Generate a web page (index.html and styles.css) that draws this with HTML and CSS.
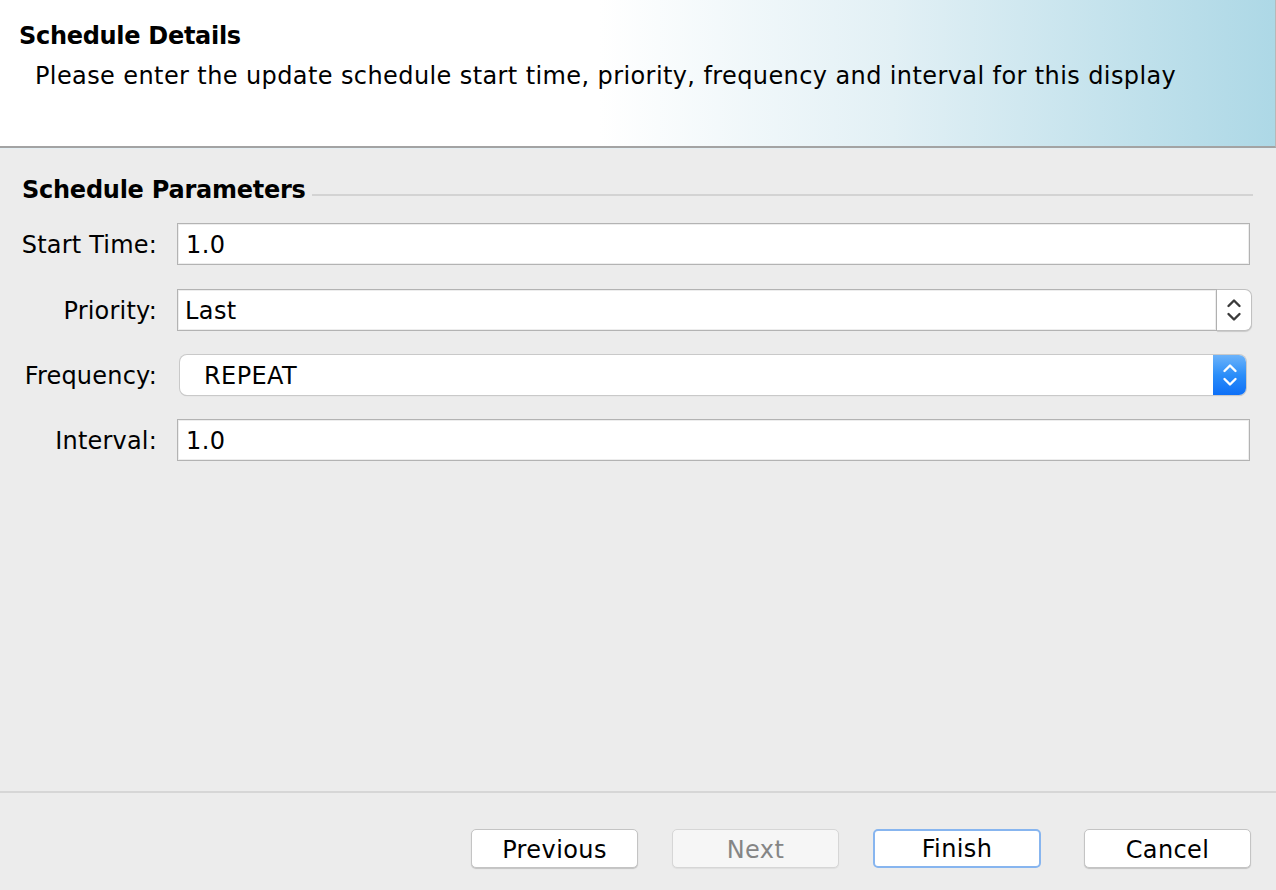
FILE: index.html
```html
<!DOCTYPE html>
<html>
<head>
<meta charset="utf-8">
<link rel="stylesheet" href="styles.css">
</head>
<body>
<div class="dialog">
  <header class="banner">
    <div class="banner-title">Schedule Details</div>
    <div class="banner-desc">Please enter the update schedule start time, priority, frequency and interval for this display</div>
  </header>
  <main class="content">
    <div class="group-title"><span class="group-label">Schedule Parameters</span><span class="group-rule"></span></div>
    <div class="form">
      <label class="lbl">Start Time:</label>
      <div class="field text-field">1.0</div>
      <label class="lbl">Priority:</label>
      <div class="field spinner">
        <div class="spinner-text">Last</div>
        <div class="spinner-btn">
          <svg width="18" height="28" viewBox="0 0 18 28"><path d="M3.5 10 L9 4.5 L14.5 10" fill="none" stroke="#3a3a3a" stroke-width="2.4" stroke-linecap="round" stroke-linejoin="round"/><path d="M3.5 18 L9 23.5 L14.5 18" fill="none" stroke="#3a3a3a" stroke-width="2.4" stroke-linecap="round" stroke-linejoin="round"/></svg>
        </div>
      </div>
      <label class="lbl">Frequency:</label>
      <div class="combo">
        <div class="combo-text">REPEAT</div>
        <div class="combo-btn">
          <svg width="18" height="28" viewBox="0 0 18 28"><path d="M3.5 10 L9 4.5 L14.5 10" fill="none" stroke="#ffffff" stroke-width="2.4" stroke-linecap="round" stroke-linejoin="round"/><path d="M3.5 18 L9 23.5 L14.5 18" fill="none" stroke="#ffffff" stroke-width="2.4" stroke-linecap="round" stroke-linejoin="round"/></svg>
        </div>
      </div>
      <label class="lbl">Interval:</label>
      <div class="field text-field">1.0</div>
    </div>
  </main>
  <footer class="footer">
    <button class="btn">Previous</button>
    <button class="btn disabled">Next</button>
    <button class="btn default">Finish</button>
    <button class="btn">Cancel</button>
  </footer>
</div>
</body>
</html>
```

FILE: styles.css
```css
* { box-sizing: border-box; }
html, body { margin: 0; padding: 0; }
body {
  width: 1276px;
  height: 890px;
  background: #ececec;
  font-family: "DejaVu Sans", "Liberation Sans", sans-serif;
  color: #000;
  overflow: hidden;
  letter-spacing: 0.4px;
}
.dialog {
  display: flex;
  flex-direction: column;
  height: 890px;
}
.banner {
  height: 148px;
  background: linear-gradient(90deg, #ffffff 0%, #ffffff 47%, #e2f0f5 70%, #add8e6 100%);
  border-bottom: 2px solid #a3a3a3;
  border-right: 1px solid #b8b8b8;
  padding: 21px 0 0 19px;
  flex: none;
}
.banner-title {
  font-weight: bold;
  font-size: 24px;
  line-height: 30px;
  letter-spacing: -0.3px;
}
.banner-desc {
  font-size: 24px;
  line-height: 30px;
  margin-top: 10px;
  padding-left: 16px;
}
.content {
  flex: 1;
  padding-top: 24px;
  border-top: 1px solid #e4eef2;
}
.group-title {
  display: flex;
  align-items: center;
  padding-left: 22px;
  padding-right: 23px;
  height: 34px;
}
.group-label {
  font-weight: bold;
  font-size: 24px;
  letter-spacing: -0.25px;
}
.group-rule {
  flex: 1;
  height: 2px;
  background: #d3d3d3;
  margin-left: 6px;
  margin-top: 10px;
}
.form {
  display: grid;
  grid-template-columns: 157px 1fr;
  column-gap: 20px;
  row-gap: 24px;
  padding: 0 26px 0 0;
  margin-top: 16px;
  font-size: 24px;
}
.lbl {
  text-align: right;
  align-self: center;
  padding-top: 2px;
  letter-spacing: 0.2px;
}
.field {
  height: 42px;
  background: #fff;
  border: 1px solid #b3b3b3;
  box-shadow: inset 0 0 0 1px #ededed;
  display: flex;
  align-items: center;
  padding-left: 8px;
  padding-top: 2px;
}
.spinner {
  padding-left: 0;
  padding-top: 0;
  border: none;
  box-shadow: none;
  background: transparent;
  margin-right: -2px;
}
.spinner-text {
  flex: 1;
  height: 42px;
  background: #fff;
  border: 1px solid #b3b3b3;
  display: flex;
  align-items: center;
  padding-left: 7px;
  padding-top: 2px;
  box-shadow: inset 0 0 0 1px #ededed;
}
.spinner-btn {
  width: 35px;
  height: 42px;
  background: #fff;
  border: 1px solid #c0c0c0;
  border-left: none;
  border-radius: 0 7px 7px 0;
  box-shadow: 0 1px 1px rgba(0,0,0,0.15);
  display: flex;
  align-items: center;
  justify-content: center;
}
.combo {
  height: 40px;
  margin: 0 4px 0 3px;
  display: flex;
  border-radius: 7px;
  background: #fff;
  box-shadow: 0 0 0 1px #c9c9c9, 0 1px 1px rgba(0,0,0,0.2);
  overflow: hidden;
}
.combo-text {
  flex: 1;
  display: flex;
  align-items: center;
  padding-left: 24px;
  padding-top: 2px;
}
.combo-btn {
  width: 33px;
  background: linear-gradient(180deg, #6cb3fa 0%, #2b8ef9 50%, #0e70f7 100%);
  display: flex;
  align-items: center;
  justify-content: center;
}
.footer {
  flex: none;
  height: 99px;
  border-top: 2px solid #d6d6d6;
  display: flex;
  align-items: flex-start;
  justify-content: flex-end;
  padding: 36px 25px 0 0;
  gap: 34px;
}
.btn {
  font-family: inherit;
  font-size: 24px;
  letter-spacing: 0.4px;
  width: 167px;
  height: 39px;
  background: #fff;
  border: 1px solid #c4c4c4;
  border-radius: 5px;
  box-shadow: 0 1px 1px rgba(0,0,0,0.18);
  color: #000;
  padding: 3px 0 0 0;
  line-height: 34px;
}
.btn.disabled {
  background: #f6f6f6;
  color: #858585;
  border-color: #d6d6d6;
  box-shadow: 0 1px 1px rgba(0,0,0,0.06);
}
.btn.default {
  border: 2px solid #87b5ef;
  box-shadow: none;
  width: 168px;
  margin-right: 9px;
  padding-top: 2px;
  line-height: 33px;
}
```
